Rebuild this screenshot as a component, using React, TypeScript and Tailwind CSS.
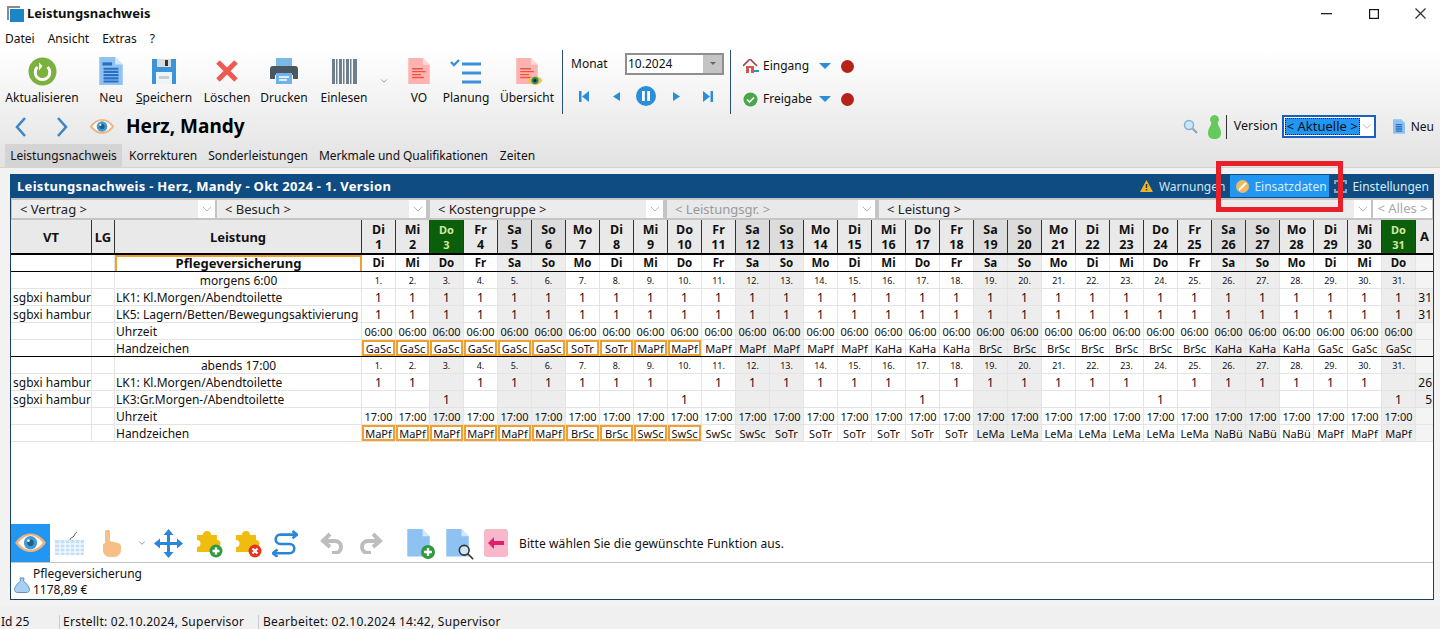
import React from "react";
import { ChevronDown } from "lucide-react";

const days = ["Di","Mi","Do","Fr","Sa","So","Mo"];
const D = Array.from({ length: 31 }, (_, i) => ({ n: i + 1, name: days[i % 7], shade: i % 7 === 4 || i % 7 === 5 || i === 2 || i === 30, today: i === 2 || i === 30 }));

function expand(spec: [string, number][]) { const r: string[] = []; spec.forEach(([s, c]) => { for (let i = 0; i < c; i++) r.push(s); }); return r; }
const hzM = expand([["GaSc",6],["SoTr",2],["MaPf",2],["MaPf",5],["KaHa",3],["BrSc",7],["KaHa",3],["GaSc",3]]);
const hzA = expand([["MaPf",6],["BrSc",2],["SwSc",2],["SwSc",2],["SoTr",6],["LeMa",7],["NaBü",3],["MaPf",3]]);

function Cell({ shade, children, small }: { shade?: boolean; children?: React.ReactNode; small?: boolean }) {
  return <div className={`w-[34px] shrink-0 border-r border-b border-[#e4e4e4] flex items-center justify-center overflow-hidden ${shade ? "bg-[#ededed]" : "bg-white"} ${small ? "text-[9px]" : ""}`}>{children}</div>;
}
function Row({ vt, label, center, cells, a, small }: { vt?: string; label?: string; center?: boolean; cells: (i: number) => React.ReactNode; a?: string; small?: boolean }) {
  return (
    <div className="flex h-[17px] shrink-0 text-[12px] leading-[17px]">
      <div className="w-[81px] shrink-0 border-r border-b border-[#e4e4e4] pl-[2px] whitespace-nowrap overflow-hidden">{vt}</div>
      <div className="w-[23px] shrink-0 border-r border-b border-[#e4e4e4]" />
      <div className={`w-[247px] shrink-0 border-r border-b border-[#e4e4e4] pl-[1px] whitespace-nowrap overflow-hidden ${center ? "text-center" : ""}`}>{label}</div>
      {D.map((d, i) => <Cell key={i} shade={d.shade} small={small}>{cells(i)}</Cell>)}
      <div className={`w-[17px] shrink-0 border-b border-[#e4e4e4] flex justify-end pr-[1px] ${a ? "bg-[#ededed]" : "bg-[#f4f4f4]"}`}>{a}</div>
    </div>
  );
}
function Hz({ t, hl }: { t: string; hl: boolean }) {
  return hl
    ? <div className="w-[33px] h-[16px] border-2 border-[#f0a030] flex items-center justify-center text-[11px] leading-none bg-white">{t}</div>
    : <span className="text-[11px]">{t}</span>;
}
function Select({ w, label, ml = "", bg = "bg-[#ececec]", text = "text-[#222]" }: { w: string; label: string; ml?: string; bg?: string; text?: string }) {
  return (
    <div className={`${w} ${ml} h-[18px] ${bg} ${text} flex items-center justify-between pl-[8px] text-[13px] shrink-0`}>
      <span className="pt-[1px]">{label}</span>
      <div className="w-[17px] h-[18px] bg-white flex items-center justify-center"><ChevronDown size={16} strokeWidth={1} className="text-[#999]" /></div>
    </div>
  );
}
function TB({ w, ml, label, children }: { w: string; ml: string; label: React.ReactNode; children: React.ReactNode }) {
  return (
    <div className={`${w} ${ml} shrink-0 flex flex-col items-center pt-[5px]`}>
      <div className="h-[32px] flex items-center justify-center">{children}</div>
      <div className="text-[12px] leading-[16px] mt-[3px] whitespace-nowrap">{label}</div>
    </div>
  );
}
const Doc = ({ fill = "#8ec2f2", fold = "#d6e8fa", s = 24, children }: { fill?: string; fold?: string; s?: number; children?: React.ReactNode }) => (
  <svg width={s} height={s * 1.2} viewBox="0 0 22 27"><path d="M0 0h15l7 7v20H0z" fill={fill} /><path d="M15 0l7 7h-7z" fill={fold} />{children}</svg>
);
const Eye = ({ s = 26 }: { s?: number }) => (
  <svg width={s} height={s * 0.65} viewBox="0 0 32 20"><path d="M1 10C6 3 11 1 16 1s10 2 15 9c-5 7-10 9-15 9S6 17 1 10z" fill="#f0b27a" /><path d="M4 10C8 5 12 3 16 3s8 2 12 7c-4 5-8 7-12 7s-8-2-12-7z" fill="#fff" /><circle cx="16" cy="10" r="6.5" fill="#3f9bd5" /><circle cx="16" cy="10" r="3.2" fill="#1f5f85" /><circle cx="14" cy="8" r="1.3" fill="#fff" /></svg>
);
const Puzzle = ({ badge }: { badge: "add" | "del" }) => (
  <svg width="28" height="30" viewBox="0 0 28 30">
    <path d="M1 7h6a4 4 0 1 1 8 0h6v5a3.5 3.5 0 1 1 0 7v5H1v-5a3.5 3.5 0 1 0 0-7z" fill="#eebd10" />
    <circle cx="20" cy="23" r="6.5" fill={badge === "add" ? "#2f9a3e" : "#e8331f"} />
    {badge === "add" ? <path d="M20 19.5v7M16.5 23h7" stroke="#fff" strokeWidth="2.4" /> : <path d="M17.5 20.5l5 5M22.5 20.5l-5 5" stroke="#fff" strokeWidth="2.2" />}
  </svg>
);

export default function App() {
  return (
    <div className="w-[1440px] h-[629px] overflow-hidden relative bg-[#f0f0f0] text-[#111] flex flex-col" style={{ fontFamily: '"Noto Sans", sans-serif' }}>
      {/* title */}
      <div className="h-[27px] bg-white flex items-center shrink-0">
        <svg width="17" height="16" viewBox="0 0 17 16" className="ml-[7px]"><path d="M0 0h13v2H2v12H0z" fill="#8a8a8a" /><rect x="3" y="3" width="14" height="13" fill="#1a86c8" /></svg>
        <span className="ml-[3px] text-[13px] font-bold">Leistungsnachweis</span>
        <div className="ml-auto flex items-center">
          <svg width="11" height="2" viewBox="0 0 11 2" className="mr-[37px]"><rect width="11" height="1.3" fill="#222" /></svg>
          <svg width="10" height="10" viewBox="0 0 10 10" className="mr-[36px]"><rect x="0.6" y="0.6" width="8.800" height="8.800" fill="none" stroke="#111" strokeWidth="1.200" /></svg>
          <svg width="11" height="11" viewBox="0 0 11 11" className="mr-[14px]"><path d="M0.5 0.5l10 10M10.5 0.5l-10 10" stroke="#333" strokeWidth="1.300" /></svg>
        </div>
      </div>
      {/* menu */}
      <div className="h-[23px] bg-white flex items-center text-[12px] pl-[5px] gap-[13px] shrink-0">
        <span>Datei</span><span>Ansicht</span><span>Extras</span><span>?</span>
      </div>
      {/* ribbon */}
      <div className="h-[117px] shrink-0 bg-gradient-to-b from-[#ffffff] to-[#e2e2e2] flex flex-col">
        <div className="h-[64px] shrink-0 flex">
          <TB w="w-[76px]" ml="ml-[4px]" label="Aktualisieren">
            <svg width="29" height="29" viewBox="0 0 29 29"><circle cx="14.5" cy="14.5" r="14" fill="#7cb13f" /><path d="M19.5 10a7.3 7.3 0 1 1-10 0" fill="none" stroke="#fff" strokeWidth="3" /><path d="M11 5.5v8h-1l1 0 3.5-4.5z" fill="#fff" /></svg>
          </TB>
          <TB w="w-[30px]" ml="ml-[16px]" label="Neu">
            <Doc><rect x="3" y="5" width="9" height="3" fill="#2a6fc0" /><path d="M4 11h14M4 14h14M4 17h14M4 20h14M4 23h14" stroke="#2a6fc0" strokeWidth="2" /></Doc>
          </TB>
          <TB w="w-[60px]" ml="ml-[8px]" label={<span><u>S</u>peichern</span>}>
            <svg width="24" height="25" viewBox="0 0 24 25"><path d="M0 0h24v25H0z" fill="#3d93d8" /><rect x="5" y="0" width="14" height="8" fill="#d7dce0" /><rect x="13" y="1" width="3" height="6" fill="#333" /><rect x="4" y="13" width="16" height="12" fill="#eef3f7" /><rect x="7" y="17" width="10" height="3" fill="#c5cdd3" /></svg>
          </TB>
          <TB w="w-[50px]" ml="ml-[8px]" label="Löschen">
            <svg width="24" height="24" viewBox="0 0 24 24"><path d="M3 3l18 18M21 3L3 21" stroke="#ee5a52" strokeWidth="5" /></svg>
          </TB>
          <TB w="w-[50px]" ml="ml-[7px]" label="Drucken">
            <svg width="28" height="26" viewBox="0 0 28 26"><rect x="6" y="0" width="16" height="8" fill="#7ab8ea" /><path d="M3 8h22a3 3 0 0 1 3 3v10h-5v-4H5v4H0V11a3 3 0 0 1 3-3z" fill="#4a5660" /><rect x="6" y="15" width="16" height="11" fill="#6fb2ea" /><path d="M9 19h10M9 22h8" stroke="#fff" strokeWidth="1.4" /></svg>
          </TB>
          <TB w="w-[54px]" ml="ml-[8px]" label="Einlesen">
            <svg width="25" height="25" viewBox="0 0 25 25" fill="#6d7f8c"><rect x="0" width="3" height="25" /><rect x="4" width="1.5" height="25" /><rect x="7" width="3" height="25" /><rect x="11" width="1.5" height="25" /><rect x="14" width="3" height="25" /><rect x="18" width="1.5" height="25" /><rect x="21" width="4" height="25" /></svg>
          </TB>
          <div className="w-[10px] ml-[8px] shrink-0 flex items-center h-[48px] pt-[14px]"><ChevronDown size={10} className="text-[#888]" /></div>
          <TB w="w-[24px]" ml="ml-[18px]" label="VO">
            <Doc fill="#ffb3b0" fold="#f8dcdc" s={22}><path d="M4 11h11M4 14h14M4 17h9M4 20h12" stroke="#ee5340" strokeWidth="1.4" /></Doc>
          </TB>
          <TB w="w-[50px]" ml="ml-[10px]" label="Planung">
            <svg width="32" height="26" viewBox="0 0 32 26"><path d="M1 4l3 3 5-5" fill="none" stroke="#3d8fdc" strokeWidth="2.4" /><path d="M12 6h19M12 15h19M12 24h19" stroke="#3d8fdc" strokeWidth="3" /></svg>
          </TB>
          <TB w="w-[56px]" ml="ml-[8px]" label="Übersicht">
            <div className="relative">
              <Doc fill="#ffb3b0" fold="#f8dcdc" s={22}><path d="M4 11h11M4 14h14M4 17h9M4 20h12" stroke="#ee5340" strokeWidth="1.4" /></Doc>
              <div className="absolute left-[11px] top-[17px]"><svg width="16" height="11" viewBox="0 0 32 20"><path d="M1 10C6 3 11 1 16 1s10 2 15 9c-5 7-10 9-15 9S6 17 1 10z" fill="#f2c14e" /><circle cx="16" cy="10" r="7" fill="#1f8a70" /><circle cx="16" cy="10" r="3" fill="#123" /></svg></div>
            </div>
          </TB>
          <div className="w-px h-[64px] bg-[#2a4f7a] ml-[7px]" />
          <div className="ml-[8px] w-[159px] shrink-0 flex flex-col">
            <div className="flex items-center h-[21px] mt-[3px]">
              <span className="text-[12px] w-[54px]">Monat</span>
              <div className="w-[99px] h-[22px] border-2 border-[#8f8f8f] bg-white flex items-center text-[12px] pl-[1px] justify-between">
                <span>10.2024</span>
                <div className="w-[19px] h-full bg-[#c4c4c4] flex items-center justify-center"><div className="w-0 h-0 border-l-[3px] border-r-[3px] border-t-[3px] border-l-transparent border-r-transparent border-t-[#666]" /></div>
              </div>
            </div>
            <div className="flex items-center h-[20px] mt-[12px] text-[#2a8ed8]">
              <svg width="10" height="11" viewBox="0 0 10 11" className="ml-[8px]" fill="currentColor"><rect width="2.5" height="11" /><path d="M10 0v11L3 5.5z" /></svg>
              <svg width="7" height="9" viewBox="0 0 7 9" className="ml-[24px]" fill="currentColor"><path d="M7 0v9L0 4.500z" /></svg>
              <svg width="20" height="20" viewBox="0 0 20 20" className="ml-[16px]"><circle cx="10" cy="10" r="10" fill="currentColor" /><rect x="6" y="5" width="2.8" height="10" fill="#fff" /><rect x="11.200" y="5" width="2.8" height="10" fill="#fff" /></svg>
              <svg width="7" height="9" viewBox="0 0 7 9" className="ml-[17px]" fill="currentColor"><path d="M0 0v9l7-4.500z" /></svg>
              <svg width="10" height="11" viewBox="0 0 10 11" className="ml-[23px]" fill="currentColor"><rect x="7.500" width="2.500" height="11" /><path d="M0 0v11l7-5.500z" /></svg>
            </div>
          </div>
          <div className="w-px h-[64px] bg-[#2a4f7a]" />
          <div className="ml-[12px] flex flex-col text-[12px]">
            <div className="flex items-center h-[20px] mt-[6px]">
              <svg width="16" height="15" viewBox="0 0 16 15"><path d="M0 7l7-7 7 7" fill="none" stroke="#a0404a" strokeWidth="1.6" /><rect x="3" y="7" width="8" height="7" fill="#d9534f" /><rect x="6" y="9" width="2" height="5" fill="#fff" /><path d="M10 12h6" stroke="#2a8ed8" strokeWidth="2" /></svg>
              <span className="ml-[4px] w-[56px]">Eingang</span>
              <div className="w-0 h-0 border-l-[6px] border-r-[6px] border-t-[6px] border-l-transparent border-r-transparent border-t-[#2a8ed8]" />
              <div className="ml-[10px] w-[13px] h-[13px] rounded-full bg-[#b5221a]" />
            </div>
            <div className="flex items-center h-[20px] mt-[13px]">
              <svg width="15" height="15" viewBox="0 0 15 15"><circle cx="7.500" cy="7.500" r="7" fill="#4aa64a" /><path d="M4 7.500l2.500 2.500 4.500-4.500" fill="none" stroke="#fff" strokeWidth="1.6" /></svg>
              <span className="ml-[5px] w-[56px]">Freigabe</span>
              <div className="w-0 h-0 border-l-[6px] border-r-[6px] border-t-[6px] border-l-transparent border-r-transparent border-t-[#2a8ed8]" />
              <div className="ml-[10px] w-[13px] h-[13px] rounded-full bg-[#b5221a]" />
            </div>
          </div>
        </div>
        {/* nav row */}
        <div className="h-[25px] shrink-0 flex items-center">
          <svg width="13" height="22" viewBox="0 0 13 22" className="ml-[14px]"><path d="M11 2L3 11l8 9" fill="none" stroke="#3d86c6" strokeWidth="2.6" /></svg>
          <svg width="13" height="22" viewBox="0 0 13 22" className="ml-[29px]"><path d="M2 2l8 9-8 9" fill="none" stroke="#3d86c6" strokeWidth="2.6" /></svg>
          <div className="ml-[20px]"><Eye /></div>
          <span className="ml-[11px] text-[19px] font-bold leading-none text-black">Herz, Mandy</span>
          <div className="ml-auto flex items-center text-[12px]">
            <svg width="15" height="15" viewBox="0 0 15 15"><circle cx="6" cy="6" r="4.500" fill="#cfe6f6" stroke="#7db4d8" strokeWidth="1.500" /><path d="M9.500 9.500l4.500 4.500" stroke="#8fa3b0" strokeWidth="2" /></svg>
            <svg width="13" height="24" viewBox="0 0 13 24" className="ml-[10px]"><path d="M6.500 0a4.500 4.500 0 0 1 3.500 7.300c-.6 1 0 2.500 1 4.200 1.200 2 2 4 2 6.500 0 4-2.500 6-6.500 6S0 22 0 18c0-2.500.8-4.500 2-6.500 1-1.700 1.600-3.200 1-4.200A4.500 4.500 0 0 1 6.500 0z" fill="#66c95c" /></svg>
            <div className="w-px h-[24px] bg-[#333] ml-[5px]" />
            <span className="ml-[7px] w-[48px] text-[12.500px]">Version</span>
            <div className="w-[94px] h-[23px] border-2 border-[#1a5fc0] bg-white flex items-center justify-between">
              <span className="bg-[#2196f3] text-[#111] px-[1px] h-[17px] ml-[1px] border border-dotted border-[#111] whitespace-nowrap text-[13px] flex items-center">&lt; Aktuelle &gt;</span>
              <ChevronDown size={15} strokeWidth={1} className="text-[#888]" />
            </div>
            <svg width="12" height="15" viewBox="0 0 22 27" className="ml-[17px]"><path d="M0 0h15l7 7v20H0z" fill="#8ec2f2" /><path d="M5 10h12M5 14h12M5 18h12M5 22h12" stroke="#2a6fc0" strokeWidth="2.500" /></svg>
            <span className="ml-[6px] mr-[6px]">Neu</span>
          </div>
        </div>
        {/* tabs */}
        <div className="h-[28px] flex items-end pl-[5px] text-[12px]">
          <div className="h-[23px] w-[117px] bg-[#d4d4d4] flex items-center justify-center">Leistungsnachweis</div>
          <span className="ml-[7px] mb-[2px]">Korrekturen</span>
          <span className="ml-[11px] mb-[2px]">Sonderleistungen</span>
          <span className="ml-[11px] mb-[2px] tracking-[-0.1px]">Merkmale und Qualifikationen</span>
          <span className="ml-[12px] mb-[2px]">Zeiten</span>
        </div>
      </div>
      {/* main */}
      <div className="h-[439px] shrink-0 border-t border-[#d8d4c8] px-[10px] pt-[6px] pb-[6px] flex flex-col bg-[#f2f2f2]">
        <div className="flex-1 border border-[#173f5f] border-t-0 bg-white flex flex-col w-[1424px]">
          <div className="h-[24px] -mx-px bg-[#0f4c81] flex items-center text-white text-[13px] shrink-0">
            <span className="ml-[7px] pt-[2px] font-bold tracking-[0.3px]">Leistungsnachweis - Herz, Mandy - Okt 2024 - 1. Version</span>
            <div className="ml-auto flex items-center h-full text-[12px]">
              <svg width="13" height="12" viewBox="0 0 13 12"><path d="M6.500 0L13 12H0z" fill="#f0b429" /><rect x="5.800" y="4" width="1.400" height="4" fill="#333" /><rect x="5.800" y="9" width="1.400" height="1.400" fill="#333" /></svg>
              <span className="ml-[6px] pt-[1px] text-[#d0e4f4]">Warnungen</span>
              <div className="ml-[5px] w-[99px] h-[22px] bg-[#2196f3] flex items-center pl-[6px]">
                <svg width="13" height="13" viewBox="0 0 13 13"><circle cx="6.500" cy="6.500" r="6.500" fill="#f0b860" /><path d="M3 10l7-7" stroke="#fff" strokeWidth="2" /></svg>
                <span className="ml-[5px] pt-[1px] text-[#d8ecfc]">Einsatzdaten</span>
              </div>
              <svg width="13" height="13" viewBox="0 0 13 13" className="ml-[5px]" fill="none" stroke="#8aa3b8" strokeWidth="2"><path d="M1 4V1h3M9 1h3v3M12 9v3H9M4 12H1V9" /></svg>
              <span className="ml-[5px] mr-[5px] pt-[1px] text-[#d8ecfc]">Einstellungen</span>
            </div>
          </div>
          {/* filters */}
          <div className="h-[22px] bg-[#c4c4c4] flex items-center gap-[2px] pl-[1px] shrink-0">
            <Select w="w-[203px]" label="< Vertrag >" />
            <Select w="w-[209px]" label="< Besuch >" />
            <Select w="w-[233px]" ml="ml-[2px]" label="< Kostengruppe >" />
            <Select w="w-[208px]" ml="ml-[2px]" label="< Leistungsgr. >" bg="bg-[#e9e9e9]" text="text-[#999]" />
            <Select w="w-[492px]" ml="ml-[2px]" label="< Leistung >" />
            <div className="w-[59px] h-[18px] bg-white text-[#aaa] text-[13px] flex items-center justify-center">&lt; Alles &gt;</div>
          </div>
          {/* table header */}
          <div className="flex h-[35px] shrink-0 border-b-2 border-black text-[13px] font-bold text-[#111] leading-[15px]">
            <div className="w-[81px] shrink-0 border-r border-[#333] bg-[#e9e9e9] flex items-center justify-center pt-[2px]">VT</div>
            <div className="w-[23px] shrink-0 border-r border-[#333] bg-[#e9e9e9] flex items-center justify-center pt-[2px]">LG</div>
            <div className="w-[247px] shrink-0 border-r border-[#333] bg-[#e9e9e9] flex items-center justify-center pt-[2px]">Leistung</div>
            {D.map((d) => (
              <div key={d.n} className={`w-[34px] shrink-0 border-r border-[#333] flex flex-col items-center justify-center pt-[1px] text-[12.500px] ${d.today ? "bg-[#0b5f0b] text-[#d8e8a0]" : d.shade ? "bg-[#dcdcdc]" : "bg-[#e9e9e9]"}`}>
                <span className={d.today ? "text-[11px]" : ""}>{d.name}</span><span className={d.today ? "text-[11px]" : ""}>{d.n}</span>
              </div>
            ))}
            <div className="w-[17px] shrink-0 bg-[#e9e9e9] flex items-center justify-center">A</div>
          </div>
          {/* pflege row */}
          <div className="flex h-[17px] shrink-0 border-b border-black text-[11.500px] font-bold leading-[15px]">
            <div className="w-[81px] shrink-0 border-r border-[#e4e4e4]" />
            <div className="w-[23px] shrink-0 border-r border-[#e4e4e4]" />
            <div className="w-[247px] shrink-0 border-2 border-b-0 border-[#f0a030] text-[13px] text-center overflow-hidden leading-[13px]">Pflegeversicherung</div>
            {D.map((d) => <div key={d.n} className={`w-[34px] shrink-0 border-r border-[#e4e4e4] text-center ${d.shade ? "bg-[#ededed]" : ""}`}>{d.name}</div>)}
            <div className="w-[17px] shrink-0 bg-[#f4f4f4]" />
          </div>
          <Row label="morgens 6:00" center small cells={(i) => `${i + 1}.`} />
          <Row vt="sgbxi hambur" label="LK1: Kl.Morgen/Abendtoilette" a="31" cells={() => "1"} />
          <Row vt="sgbxi hambur" label="LK5: Lagern/Betten/Bewegungsaktivierung" a="31" cells={() => "1"} />
          <Row label="Uhrzeit" cells={() => <span className="text-[11px]">06:00</span>} />
          <div className="h-[17px] shrink-0 border-b border-black overflow-hidden">
            <Row label="Handzeichen" cells={(i) => <Hz t={hzM[i]} hl={i < 10} />} />
          </div>
          <Row label="abends 17:00" center small cells={(i) => `${i + 1}.`} />
          <Row vt="sgbxi hambur" label="LK1: Kl.Morgen/Abendtoilette" a="26" cells={(i) => (i % 7 === 2 ? "" : "1")} />
          <Row vt="sgbxi hambur" label="LK3:Gr.Morgen-/Abendtoilette" a="5" cells={(i) => (i % 7 === 2 ? "1" : "")} />
          <Row label="Uhrzeit" cells={() => <span className="text-[11px]">17:00</span>} />
          <Row label="Handzeichen" cells={(i) => <Hz t={hzA[i]} hl={i < 10} />} />
          <div className="flex-1" />
          {/* bottom toolbar */}
          <div className="h-[39px] shrink-0 border-b border-[#c4c4c4] flex items-center">
            <div className="w-[39px] h-[38px] bg-[#2196f3] flex items-center justify-center"><Eye s={33} /></div>
            <svg width="31" height="25" viewBox="0 0 31 25" className="ml-[4px]"><path d="M16 9c0-3 3-2 4-4s1-3 3-4" fill="none" stroke="#555" /><rect x="1" y="9" width="29" height="15" fill="#c4e0f6" /><path d="M1 13h29M1 17h29M1 21h29M6 9v15M11 9v15M16 9v15M21 9v15M26 9v15" stroke="#fff" /></svg>
            <svg width="22" height="27" viewBox="0 0 22 27" className="ml-[14px]"><path d="M6 2a2.500 2.500 0 0 1 5 0v9l8 2c2 .5 3 2 3 4v3c0 4-3 7-7 7h-4c-4 0-7-3-7-7v-6l2-1z" fill="#f6bf85" /></svg>
            <ChevronDown size={10} className="text-[#888] ml-[16px]" />
            <svg width="29" height="29" viewBox="0 0 29 29" className="ml-[7px]" fill="#2a86d8"><path d="M14.500 0l5 6h-3.500v7h7v-3.500l6 5-6 5V16h-7v7h3.500l-5 6-5-6H13v-7H6v3.500l-6-5 6-5V13h7V6H9.500z" /></svg>
            <div className="ml-[13px]"><Puzzle badge="add" /></div>
            <div className="ml-[11px]"><Puzzle badge="del" /></div>
            <svg width="26" height="28" viewBox="0 0 28 28" className="ml-[9px]" fill="none" stroke="#2a86d8" strokeWidth="2.800"><path d="M27 5H9a5 5 0 0 0 0 10h10a5 5 0 0 1 0 10H2" /><path d="M22 1l5 4-5 4M6 21l-5 4 5 4" /></svg>
            <svg width="24" height="22" viewBox="0 0 24 22" className="ml-[22px]" fill="none" stroke="#bdbdbd" strokeWidth="4"><path d="M3 9h12a6 6 0 0 1 0 12h-3" /><path d="M10 2L3 9l7 6" /></svg>
            <svg width="24" height="22" viewBox="0 0 24 22" className="ml-[15px]" fill="none" stroke="#bdbdbd" strokeWidth="4"><path d="M21 9H9a6 6 0 0 0 0 12h3" /><path d="M14 2l7 7-7 6" /></svg>
            <div className="ml-[24px] relative"><Doc s={23} /><div className="absolute -right-[5px] -bottom-[2px]"><svg width="14" height="14" viewBox="0 0 14 14"><circle cx="7" cy="7" r="7" fill="#2f9a3e" /><path d="M7 3v8M3 7h8" stroke="#fff" strokeWidth="2.400" /></svg></div></div>
            <div className="ml-[16px] relative"><Doc s={23} /><div className="absolute -right-[5px] -bottom-[3px]"><svg width="16" height="16" viewBox="0 0 18 18" fill="#cfe6f6" stroke="#333" strokeWidth="1.800"><circle cx="7" cy="7" r="5.500" /><path d="M11 11l6 6" /></svg></div></div>
            <div className="ml-[15px] w-[24px] h-[28px] bg-[#f9b8ca] rounded-[3px] flex items-center justify-center"><svg width="16" height="12" viewBox="0 0 16 12" fill="#e0206a"><path d="M0 6l6-6v4h10v4H6v4z" /></svg></div>
            <span className="ml-[11px] text-[12px] tracking-[0.1px] pt-[2px]">Bitte wählen Sie die gewünschte Funktion aus.</span>
          </div>
          {/* total */}
          <div className="h-[36px] shrink-0 flex text-[12px] leading-[16px] pt-[3px]">
            <svg width="16" height="16" viewBox="0 0 16 16" className="ml-[3px] mt-[11px]"><path d="M6 1h4l-.5 3c2.500 2 6 6 6 8.500 0 2-1.500 3-3 3H3.500c-1.500 0-3-1-3-3C.5 10 4 6 6.500 4z" fill="#a8d0f2" stroke="#5a8fc0" /></svg>
            <div className="ml-[3px]"><div>Pflegeversicherung</div><div>1178,89 €</div></div>
          </div>
        </div>
      </div>
      {/* status */}
      <div className="flex-1 bg-[#f0f0f0] flex items-center text-[12px] pt-[7px]">
        <span className="ml-[1px] w-[58px]">Id 25</span>
        <div className="w-px h-[14px] bg-[#ccc]" />
        <span className="ml-[3px] w-[195px] tracking-[0.25px] whitespace-nowrap">Erstellt: 02.10.2024, Supervisor</span>
        <div className="w-px h-[14px] bg-[#ccc]" />
        <span className="ml-[4px] tracking-[0.27px] whitespace-nowrap">Bearbeitet: 02.10.2024 14:42, Supervisor</span>
      </div>
      {/* red annotation */}
      <div className="absolute left-[1216px] top-[161px] w-[127px] h-[51px] border-[5px] border-[#e8202a]" />
    </div>
  );
}
